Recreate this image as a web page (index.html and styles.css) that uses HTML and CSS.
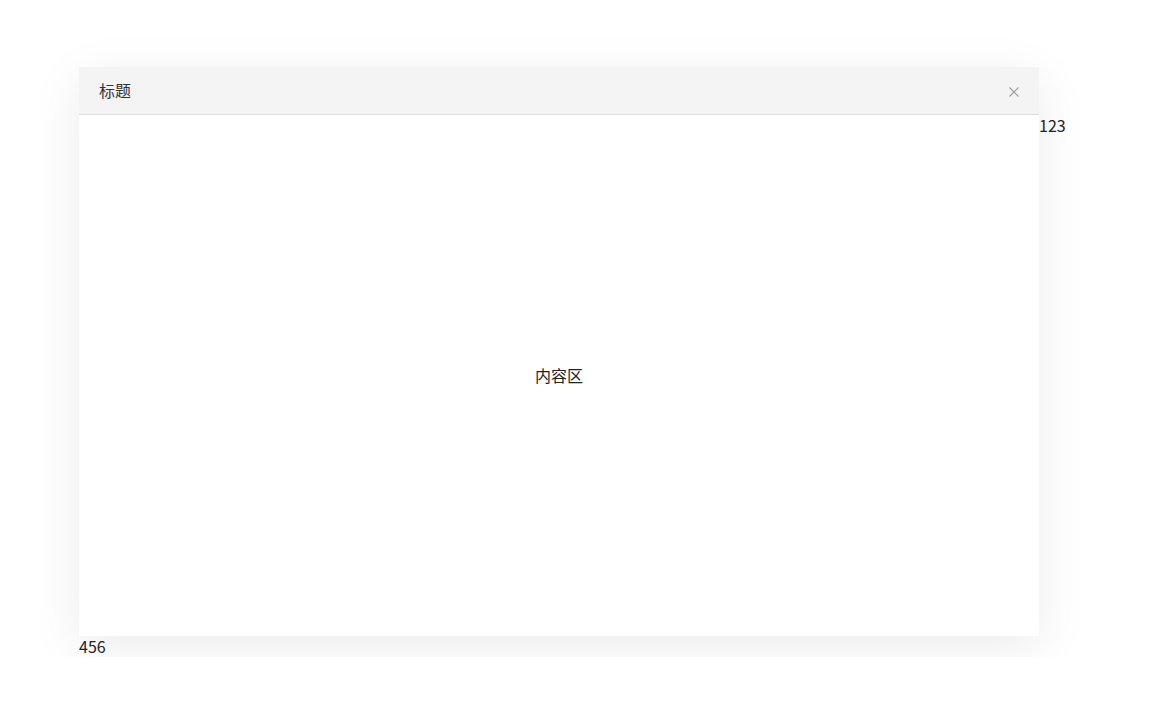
FILE: index.html
```html
<!DOCTYPE html>
<html lang="zh-CN">
<head>
<meta charset="utf-8">
<title>标题</title>
<link rel="stylesheet" href="styles.css">
</head>
<body>
<div class="page">
  <div class="frame">
    <div class="header">
      <span class="title">标题</span>
      <span class="close" aria-label="关闭">
        <svg width="10" height="10" viewBox="0 0 10 10"><path d="M0.5 0.5L9.5 9.5M9.5 0.5L0.5 9.5" stroke="#9a9a9a" stroke-width="1.1" fill="none"/></svg>
      </span>
    </div>
    <div class="main">
      <div class="content">内容区</div>
      <div class="side">123</div>
    </div>
  </div>
  <div class="foot">456</div>
</div>
</body>
</html>
```
FILE: styles.css
```css
html, body {
  margin: 0;
  padding: 0;
  background: #ffffff;
}
body {
  font-family: "Noto Sans CJK SC", "Noto Sans", sans-serif;
  font-size: 16px;
  line-height: 21px;
  color: #222;
}
.page {
  padding: 67px 0 0 79px;
}
.frame {
  width: 960px;
  background: #fff;
  box-shadow: 0 12px 48px rgba(0, 0, 0, 0.08);
}
.header {
  height: 47px;
  border-bottom: 1px solid #dcdcdc;
  background: #f4f4f4;
  display: flex;
  align-items: center;
  justify-content: space-between;
  padding: 0 20px;
}
.title {
  color: #333;
}
.close {
  display: flex;
  width: 10px;
  height: 10px;
  margin-top: 2px;
}
.main {
  display: flex;
  height: 521px;
}
.content {
  flex: 0 0 960px;
  display: flex;
  align-items: center;
  justify-content: center;
  color: #222;
}
.side {
  flex: none;
  color: #222;
}
.foot {
  color: #222;
}
```
